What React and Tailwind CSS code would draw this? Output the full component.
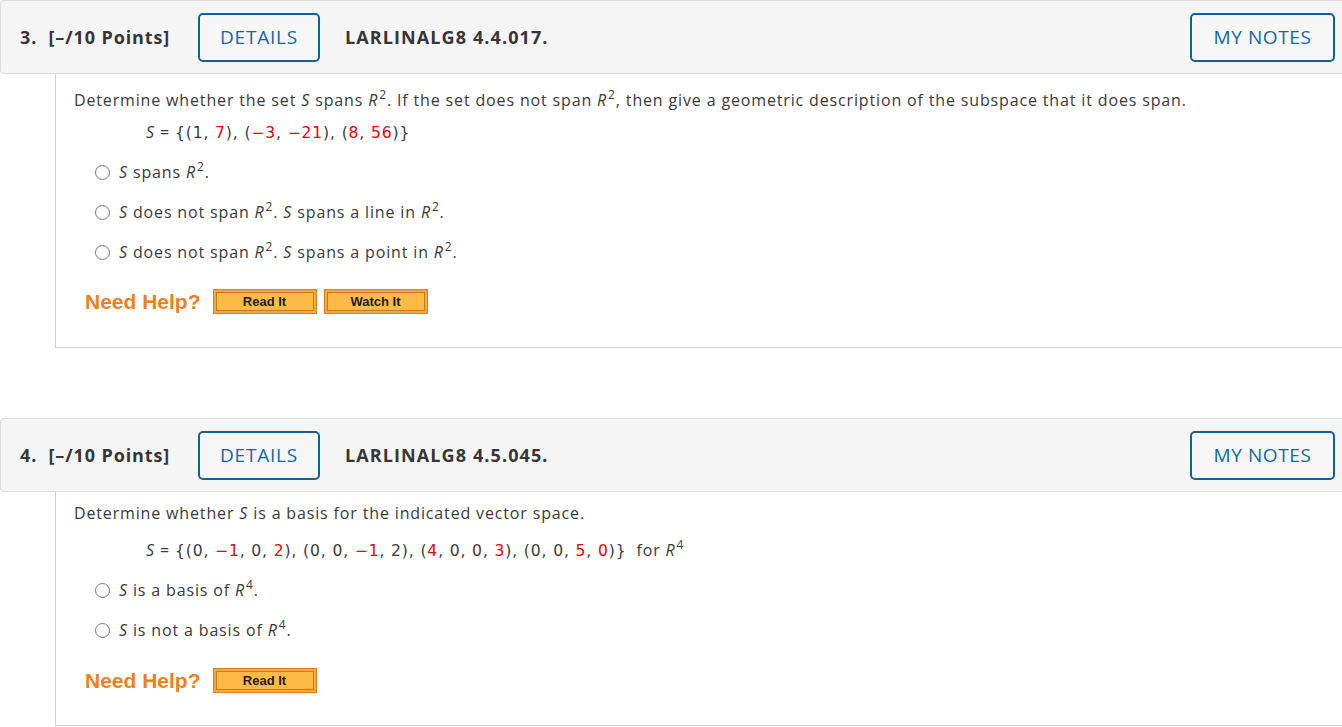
import React from "react";

const Red = ({ children }) => <span className="text-[#ee0000]">{children}</span>;
const I = ({ children }) => <span className="italic">{children}</span>;
const R = ({ n }) => (
  <>
    <I>R</I>
    <span className="inline-block text-[12px] leading-none relative -top-[7px] ml-[1px]">{n}</span>
  </>
);

function Header({ num, code }) {
  return (
    <div className="h-[74px] flex items-center bg-[#f5f5f5] border border-r-0 border-[#dedede] rounded-l-[4px] pl-[19px] pr-[7px]">
      <div className="text-[18px] font-bold text-[#363636] w-[178px] whitespace-pre tracking-[0.9px]">{`${num}.  [–/10 Points]`}</div>
      <div className="h-[49px] w-[122px] border-2 border-[#135f98] rounded-[5px] flex items-center justify-center text-[19px] text-[#1467a5] bg-[#f7f7f7] tracking-[0.8px]">
        DETAILS
      </div>
      <div className="ml-[25px] text-[18px] font-bold text-[#363636] tracking-[1.1px]">{code}</div>
      <div className="ml-auto h-[49px] w-[145px] border-2 border-[#135f98] rounded-[5px] flex items-center justify-center text-[19px] text-[#1467a5] bg-[#f7f7f7] tracking-[0.6px]">
        MY NOTES
      </div>
    </div>
  );
}

function Radio({ children }) {
  return (
    <div className="h-[40px] flex items-center pl-[21px]">
      <span className="w-[15px] h-[15px] rounded-full border-[1.5px] border-[#767676] bg-white mr-[9px]" />
      <span>{children}</span>
    </div>
  );
}

function HelpBtn({ label }) {
  return (
    <div className="h-[25px] w-[104px] border border-[#d8802a] bg-[#f8a63d] p-[2px]">
      <div className="h-full w-full border border-[#c77a22] bg-[#fdba45] flex items-center justify-center text-[13px] font-bold text-[#1d1d1d] font-['Liberation_Sans',Arial,sans-serif] tracking-normal">
        {label}
      </div>
    </div>
  );
}

function NeedHelp({ watch }) {
  return (
    <div className="flex items-center pl-[11px] gap-[7px] tracking-normal">
      <span className="text-[21px] font-bold text-[#f0801a] font-['Liberation_Sans',Arial,sans-serif] mr-[5px]">Need Help?</span>
      <HelpBtn label="Read It" />
      {watch && <HelpBtn label="Watch It" />}
    </div>
  );
}

const M = ({ children }) => (
  <span className="font-['DejaVu_Sans',sans-serif] text-[15.6px]">{children}</span>
);

export default function App() {
  return (
    <div className="w-[1342px] h-[727px] bg-white font-['Open_Sans',sans-serif] text-[16px] text-[#3a3a3a] leading-[24px] overflow-hidden tracking-[0.85px]">
      <Header num="3" code="LARLINALG8 4.4.017." />
      <div className="ml-[55px] h-[274px] border-l border-b border-[#cfcfcf] pl-[18px] pt-[14px]">
        <div>
          Determine whether the set <I>S</I> spans <R n="2" />. If the set does not span <R n="2" />, then give a geometric description of the subspace that it does span.
        </div>
        <div className="mt-[8px] pl-[72px]">
          <I>S</I> = <M>{"{"}(1, <Red>7</Red>), (<Red>−3</Red>, <Red>−21</Red>), (<Red>8</Red>, <Red>56</Red>){"}"}</M>
        </div>
        <div className="mt-[7px]">
          <Radio>
            <I>S</I> spans <R n="2" />.
          </Radio>
          <Radio>
            <I>S</I> does not span <R n="2" />. <I>S</I> spans a line in <R n="2" />.
          </Radio>
          <Radio>
            <I>S</I> does not span <R n="2" />. <I>S</I> spans a point in <R n="2" />.
          </Radio>
        </div>
        <div className="mt-[17px]">
          <NeedHelp watch />
        </div>
      </div>
      <div className="h-[70px]" />
      <Header num="4" code="LARLINALG8 4.5.045." />
      <div className="ml-[55px] h-[234px] border-l border-b border-[#cfcfcf] pl-[18px] pt-[9px]">
        <div>
          Determine whether <I>S</I> is a basis for the indicated vector space.
        </div>
        <div className="mt-[13px] pl-[72px] whitespace-pre">
          <I>S</I> = <M>{"{"}(0, <Red>−1</Red>, 0, <Red>2</Red>), (0, 0, <Red>−1</Red>, 2), (<Red>4</Red>, 0, 0, <Red>3</Red>), (0, 0, <Red>5</Red>, <Red>0</Red>){"}"}</M>  for <R n="4" />
        </div>
        <div className="mt-[7px]">
          <Radio>
            <I>S</I> is a basis of <R n="4" />.
          </Radio>
          <Radio>
            <I>S</I> is not a basis of <R n="4" />.
          </Radio>
        </div>
        <div className="mt-[18px]">
          <NeedHelp />
        </div>
      </div>
    </div>
  );
}
